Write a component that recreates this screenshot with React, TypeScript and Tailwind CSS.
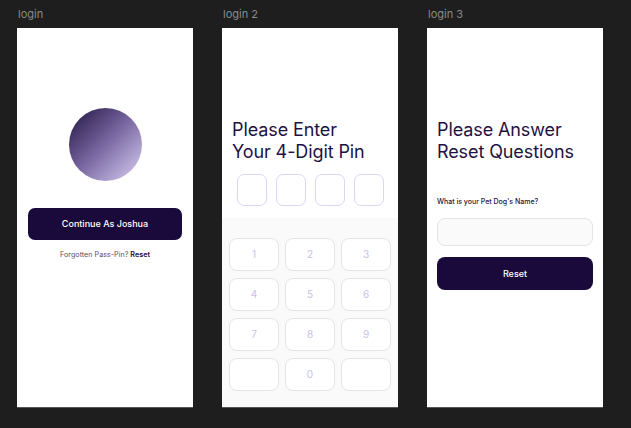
import React from 'react';

const KEYS = ['1', '2', '3', '4', '5', '6', '7', '8', '9', '', '0', ''];

const Frame: React.FC<{ label: string; children: React.ReactNode; className?: string }> = ({ label, children, className = '' }) => (
  <div className="flex flex-col w-[176px]">
    <div className="h-[14px] text-[11px] leading-[14px] text-[#8a8a8a] pl-px">{label}</div>
    <div className={`mt-[7px] h-[379px] flex flex-col bg-white shadow-[0_1px_0_#555] ${className}`}>{children}</div>
  </div>
);

export default function App() {
  return (
    <div
      className="w-[631px] h-[428px] bg-[#1e1e1e] overflow-hidden flex gap-[29px] pl-[17px] pt-[7px]"
      style={{ fontFamily: 'Inter, "Noto Sans", sans-serif' }}
    >
      {/* login */}
      <Frame label="login">
        <div className="flex flex-col items-center pt-[80px] px-[11px]">
          <div className="w-[73px] h-[73px] rounded-full bg-gradient-to-br from-[#241543] via-[#7b69a3] to-[#ddd3f5]" />
          <button className="mt-[27px] w-full h-[32px] rounded-[7px] bg-[#1a0a3c] text-white text-[9px] font-medium">
            Continue As Joshua
          </button>
          <p className="mt-[10px] text-[7.2px] text-[#55506a]">
            Forgotten Pass-Pin? <span className="font-semibold text-[#1a0a3c]">Reset</span>
          </p>
        </div>
      </Frame>

      {/* login 2 */}
      <Frame label="login 2">
        <div className="pt-[91px] px-[10px]">
          <h1 className="text-[18px] leading-[22px] tracking-[-0.1px] text-[#1f1242]">
            Please Enter
            <br />
            Your 4-Digit Pin
          </h1>
          <div className="mt-[11px] flex justify-center gap-[9px]">
            {[0, 1, 2, 3].map(i => (
              <div key={i} className="w-[30px] h-[32px] rounded-[7px] border border-[#ddd5f3] bg-white" />
            ))}
          </div>
        </div>
        <div className="mt-[12px] flex-1 bg-[#fafafa] px-[7px] pt-[20px]">
          <div className="grid grid-cols-3 gap-x-[6px] gap-y-[7px]">
            {KEYS.map((k, i) => (
              <div
                key={i}
                className="h-[33px] rounded-[8px] border border-[#e4e4e4] bg-white flex items-center justify-center text-[10px] text-[#cbc0ee]"
              >
                {k}
              </div>
            ))}
          </div>
        </div>
      </Frame>

      {/* login 3 */}
      <Frame label="login 3">
        <div className="pt-[91px] px-[10px] flex flex-col">
          <h1 className="text-[18px] leading-[22px] tracking-[-0.1px] text-[#1f1242]">
            Please Answer
            <br />
            Reset Questions
          </h1>
          <p className="mt-[34px] text-[7px] leading-[10px] font-medium text-[#1f1242]">What is your Pet Dog's Name?</p>
          <div className="mt-[11px] h-[28px] rounded-[8px] border border-[#e4e4e4] bg-[#fafafa]" />
          <button className="mt-[11px] h-[33px] rounded-[8px] bg-[#1a0a3c] text-white text-[9px] font-medium">
            Reset
          </button>
        </div>
      </Frame>
    </div>
  );
}
